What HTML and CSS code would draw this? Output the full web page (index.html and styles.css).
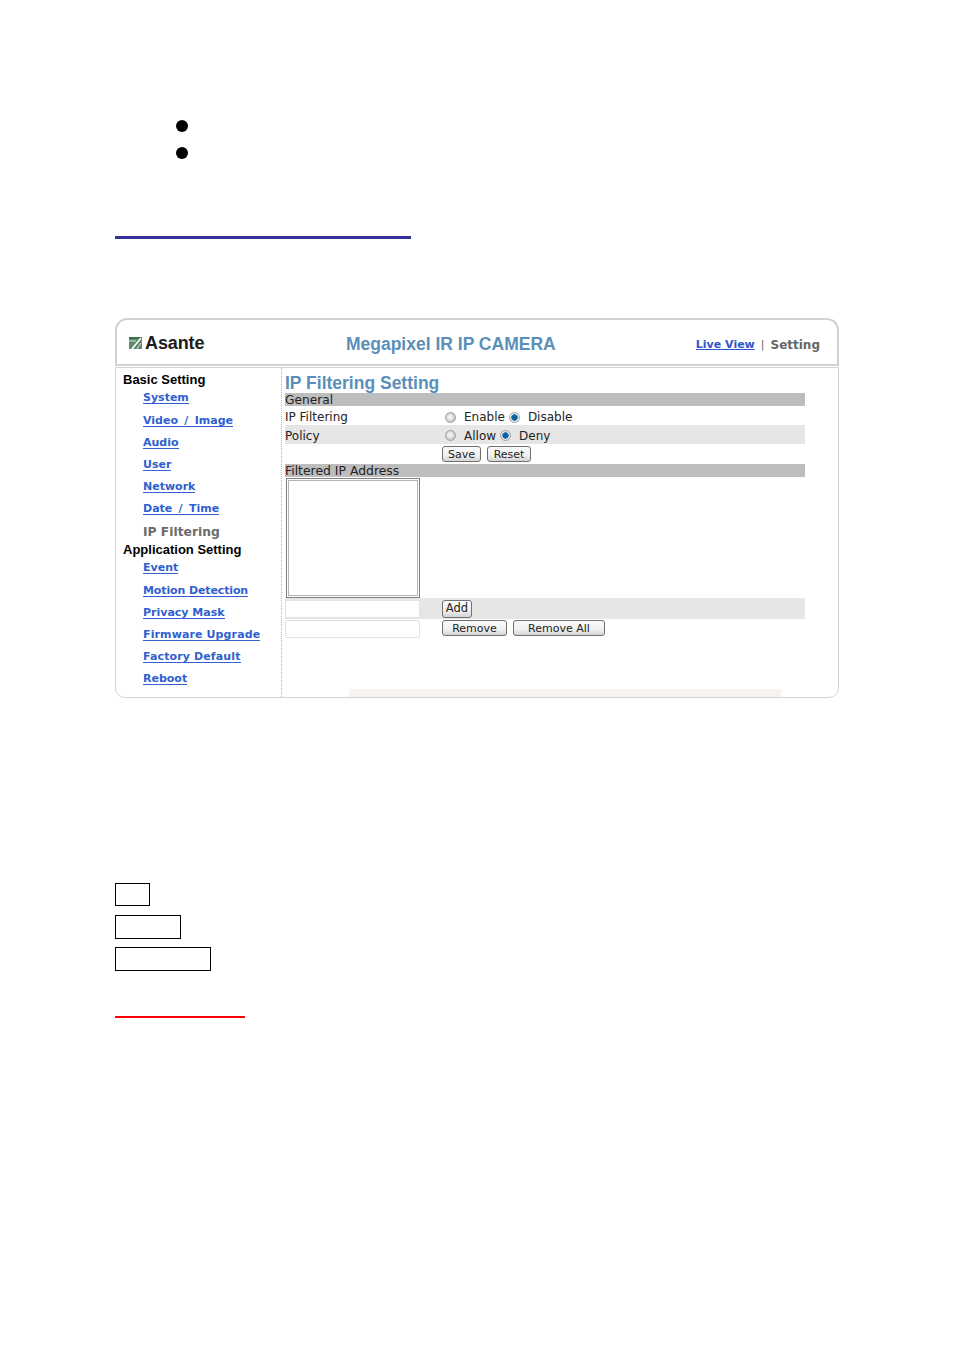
FILE: index.html
```html
<!DOCTYPE html>
<html lang="en">
<head>
  <meta charset="UTF-8">
  <title>IP Filtering Setting</title>
  <link rel="stylesheet" href="styles.css">
</head>
<body>
  <div class="dots">
    <div class="dot"></div>
    <div class="dot"></div>
  </div>
  <div class="rule-blue"></div>

  <div class="panel">
    <div class="panel-head">
      <div class="logo">
        <svg class="logo-mark" width="13" height="12" viewBox="0 0 13 12">
          <rect width="13" height="12" fill="#5d8a6c"/>
          <path d="M0 0 H13 V2 H0 Z" fill="#3f6f52"/>
          <path d="M0 4 H7" stroke="#cfe0d4" stroke-width="1"/>
          <path d="M3 12 L12 1" stroke="#fff" stroke-width="1.6"/>
          <path d="M8 12 L12 6" stroke="#dfe9e2" stroke-width="1"/>
        </svg>
        <span class="logo-text">Asante</span>
      </div>
      <div class="cam-title">Megapixel IR IP CAMERA</div>
      <div class="head-links">
        <a href="#">Live View</a>
        <span class="sep">|</span>
        <span class="current">Setting</span>
      </div>
    </div>

    <div class="panel-body">
      <div class="side">
        <div class="side-title">Basic Setting</div>
        <a class="side-link" href="#">System</a>
        <a class="side-link slash" href="#">Video / Image</a>
        <a class="side-link" href="#">Audio</a>
        <a class="side-link" href="#">User</a>
        <a class="side-link" href="#">Network</a>
        <a class="side-link slash" href="#">Date / Time</a>
        <div class="side-current">IP Filtering</div>
        <div class="side-title">Application Setting</div>
        <a class="side-link" href="#">Event</a>
        <a class="side-link tight" href="#">Motion Detection</a>
        <a class="side-link" href="#">Privacy Mask</a>
        <a class="side-link loose" href="#">Firmware Upgrade</a>
        <a class="side-link loose" href="#">Factory Default</a>
        <a class="side-link" href="#">Reboot</a>
      </div>

      <div class="main">
        <div class="main-title">IP Filtering Setting</div>
        <div class="bar bar-general">General</div>
        <div class="row row-filter">
          <div class="label">IP Filtering</div>
          <div class="controls">
            <input type="radio" name="filter">
            <label class="opt">Enable</label>
            <input type="radio" name="filter" checked>
            <label class="opt">Disable</label>
          </div>
        </div>
        <div class="row row-policy shaded">
          <div class="label">Policy</div>
          <div class="controls">
            <input type="radio" name="policy">
            <label class="opt">Allow</label>
            <input type="radio" name="policy" checked>
            <label class="opt">Deny</label>
          </div>
        </div>
        <div class="row row-save">
          <div class="label"></div>
          <div class="controls buttons">
            <button class="btn btn-save">Save</button>
            <button class="btn btn-reset">Reset</button>
          </div>
        </div>
        <div class="bar">Filtered IP Address</div>
        <select class="ip-list" size="6"></select>
        <div class="row row-add shaded">
          <input class="ip-input" type="text">
          <div class="controls buttons">
            <button class="btn btn-add">Add</button>
          </div>
        </div>
        <div class="row row-remove">
          <input class="ip-input" type="text">
          <div class="controls buttons">
            <button class="btn btn-remove">Remove</button>
            <button class="btn btn-remove-all">Remove All</button>
          </div>
        </div>
        <div class="foot-strip"></div>
      </div>
    </div>
  </div>

  <div class="boxes">
    <div class="box box-s"></div>
    <div class="box box-m"></div>
    <div class="box box-l"></div>
  </div>
  <div class="rule-red"></div>
</body>
</html>
```

FILE: styles.css
```css
body {
  margin: 0;
  padding: 120px 0 0 115px;
  background: #fff;
  color: #222;
  font-family: "DejaVu Sans", Verdana, sans-serif;
}
.dots {
  display: flex;
  flex-direction: column;
  gap: 15px;
  padding-left: 61px;
}
.dot {
  width: 12px;
  height: 12px;
  border-radius: 50%;
  background: #000;
}
.rule-blue {
  width: 296px;
  height: 3px;
  margin-top: 77px;
  background: #333399;
}

.panel {
  width: 724px;
  height: 380px;
  margin-top: 79px;
  display: flex;
  flex-direction: column;
}
.panel-head {
  box-sizing: border-box;
  height: 48px;
  display: flex;
  align-items: center;
  padding: 2px 17px 0 12px;
  border: 2px solid #d2d2d2;
  border-radius: 12px 12px 0 0;
}
.logo {
  width: 217px;
  display: flex;
  align-items: center;
  gap: 2px;
}
.logo-text {
  margin-left: 1px;
  font: bold 18px "Liberation Sans", Arial, sans-serif;
  color: #1c1c1c;
  letter-spacing: -0.1px;
}
.cam-title {
  width: 350px;
  padding-top: 3px;
  font: bold 17.5px "Liberation Sans", Arial, sans-serif;
  color: #5b8fb9;
}
.head-links {
  padding-top: 3px;
  font-size: 11px;
  font-weight: bold;
  white-space: nowrap;
  display: flex;
  gap: 6px;
  color: #666;
}
.head-links a {
  color: #2f55c8;
}
.sep {
  font-weight: normal;
}
.current {
  font-size: 12px;
}

.panel-body {
  box-sizing: border-box;
  flex: 1;
  margin-top: 1px;
  display: flex;
  border: 1px solid #d2d2d2;
  border-radius: 0 0 10px 10px;
}
.side {
  box-sizing: border-box;
  width: 166px;
  padding: 5px 0 0 7px;
  border-right: 1px dotted #b5b5b5;
  display: flex;
  flex-direction: column;
  align-items: flex-start;
}
.side-title {
  height: 14px;
  font: bold 13px/14px "Liberation Sans", Arial, sans-serif;
  color: #000;
}
.side-link {
  height: 22px;
  margin-left: 20px;
  font-size: 11px;
  font-weight: bold;
  line-height: 22px;
  color: #2f5fd0;
  text-decoration: none;
  background: linear-gradient(#3560d0, #3560d0) 0 16px / 100% 1px no-repeat;
}
.side-title + .side-link {
  margin-bottom: 1px;
}
.slash {
  word-spacing: 2.5px;
}
.tight {
  letter-spacing: -0.12px;
}
.loose {
  letter-spacing: 0.12px;
}
.side-current {
  height: 23px;
  margin-left: 20px;
  font-size: 12.3px;
  font-weight: bold;
  line-height: 24px;
  color: #6b6b6b;
}

.main {
  width: 520px;
  padding-left: 3px;
  display: flex;
  flex-direction: column;
}
.main-title {
  height: 20px;
  margin-top: 5px;
  font: bold 17.5px/20px "Liberation Sans", Arial, sans-serif;
  color: #5b8fb9;
}
.bar {
  height: 13px;
  background: #bdbdbd;
  font-size: 12.4px;
  line-height: 14px;
  color: #222;
}
.bar-general {
  font-size: 12.2px;
}
.row {
  display: flex;
  align-items: center;
}
.row-filter,
.row-policy {
  height: 19px;
  padding-top: 2px;
  box-sizing: border-box;
}
.row-filter .controls {
  padding-top: 1px;
}
.row-save {
  height: 20px;
}
.row-add {
  height: 21px;
}
.row-remove {
  height: 19px;
  align-items: flex-start;
  padding-top: 1px;
  box-sizing: border-box;
}
.shaded {
  background: #e6e6e6;
}
.label {
  width: 157px;
  font-size: 12px;
}
.controls {
  display: flex;
  align-items: center;
  font-size: 12px;
}
.controls input[type="radio"] {
  appearance: none;
  box-sizing: border-box;
  width: 11px;
  height: 11px;
  margin: 0 0 0 3px;
  border: 1px solid #a0a0a0;
  border-radius: 50%;
  background: radial-gradient(circle at 45% 45%, #f2f2f2 0 1.5px, #c8c8c8 4.5px);
}
.controls input[type="radio"]:checked {
  margin-left: 0;
  background: radial-gradient(circle, #0b5f9e 0 2px, #2a86c0 3px, #e6e6e6 3.6px);
}
.opt {
  margin: 0 4px 0 8px;
  white-space: nowrap;
}
.buttons {
  gap: 6px;
}
.btn {
  box-sizing: border-box;
  height: 16px;
  padding: 0;
  border: 1px solid #707070;
  border-radius: 3px;
  background: linear-gradient(#fafafa, #f0f0f0 60%, #d4d4d4);
  font-family: "DejaVu Sans", Verdana, sans-serif;
  font-size: 11px;
  line-height: 13px;
  color: #222;
}
.btn-save { width: 39px; }
.btn-reset { width: 44px; }
.btn-add { width: 30px; height: 18px; font-size: 11.5px; }
.btn-remove { width: 65px; }
.btn-remove-all { width: 92px; }
.ip-list {
  display: block;
  box-sizing: border-box;
  width: 134px;
  height: 120px;
  margin: 1px 0 0 1px;
  padding: 0;
  border: 1px solid #808080;
  border-radius: 0;
  box-shadow: inset 0 0 0 1px #fff, inset 0 0 0 2px #b4b4b4;
  background: #fff;
}
.ip-input {
  box-sizing: border-box;
  width: 135px;
  height: 18px;
  margin: 0 22px 0 0;
  padding: 0;
  border: 1px solid #e2e2e2;
  border-radius: 2px;
  background: #fff;
}
.foot-strip {
  width: 432px;
  height: 8px;
  margin: auto 0 0 64px;
  background: #f8f3f1;
}

.boxes {
  margin-top: 185px;
  display: flex;
  flex-direction: column;
  gap: 8px;
}
.box {
  box-sizing: border-box;
  height: 24px;
  border: 1px solid #000;
}
.box-s { width: 35px; height: 23px; margin-bottom: 1px; }
.box-m { width: 66px; }
.box-l { width: 96px; }
.rule-red {
  width: 130px;
  height: 2px;
  margin-top: 45px;
  background: #f00;
}
```
